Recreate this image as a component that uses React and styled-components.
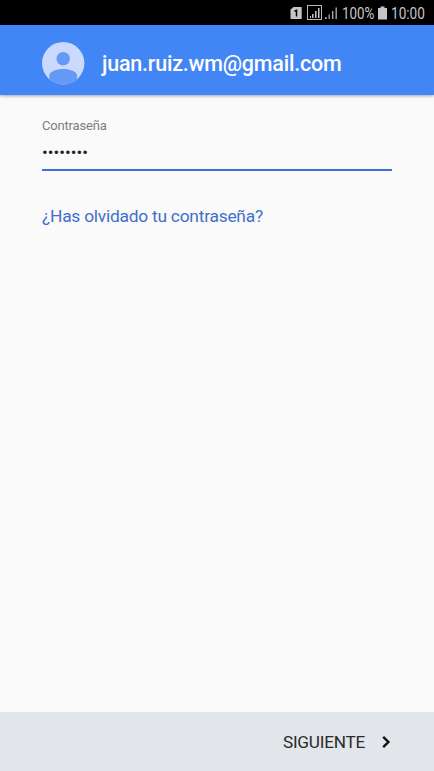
import React from 'react';
import styled, { createGlobalStyle } from 'styled-components';

const GlobalStyle = createGlobalStyle`
  *, *::before, *::after { box-sizing: border-box; }
  body { margin: 0; background: #fafafa; font-family: Roboto, "Liberation Sans", sans-serif; }
`;

const Screen = styled.div`
  display: flex;
  flex-direction: column;
  width: 100%;
  height: 100vh;
  overflow: hidden;
  background: #fafafa;
`;

const StatusBar = styled.header`
  display: flex;
  flex: none;
  align-items: center;
  justify-content: flex-end;
  height: 25px;
  padding-right: 9px;
  background: #000;
  color: #c4c4c4;
`;

const StatusIcon = styled.svg`
  display: block;
  flex: none;
  margin-right: ${(p) => p.$gap}px;
`;

const StatusText = styled.span`
  display: block;
  width: ${(p) => p.$width}px;
  margin-right: ${(p) => p.$gap || 0}px;
  font-size: 17px;
  line-height: 25px;
  white-space: nowrap;
  transform: translateY(1px) scaleX(${(p) => p.$stretch});
  transform-origin: left center;
`;

const AccountBar = styled.div`
  display: flex;
  flex: none;
  align-items: center;
  height: 70px;
  padding: 6px 42px 0;
  background: #4285f4;
  box-shadow: 0 1px 3px rgba(0, 0, 0, 0.35);
`;

const Avatar = styled.svg`
  display: block;
  flex: none;
  margin-right: 17px;
`;

const Email = styled.h1`
  margin: 1px 0 0;
  color: #fff;
  font-size: 21.5px;
  font-weight: 500;
  line-height: 28px;
  letter-spacing: -0.22px;
`;

const Content = styled.main`
  flex: 1;
  padding: 22px 42px 0;
`;

const Field = styled.div`
  display: flex;
  flex-direction: column;
  height: 54px;
  border-bottom: 2px solid #4070d0;
`;

const Label = styled.label`
  color: #7c7c7c;
  font-size: 13px;
  line-height: 17px;
  letter-spacing: -0.18px;
`;

const Password = styled.span`
  margin-top: 8px;
  color: #212121;
  font-size: 17px;
  line-height: 20px;
`;

const ForgotLink = styled.a`
  display: block;
  width: max-content;
  margin-top: 33px;
  color: #3f6fcc;
  font-size: 17.4px;
  line-height: 24px;
  letter-spacing: -0.25px;
  text-decoration: none;
`;

const Footer = styled.footer`
  display: flex;
  flex: none;
  align-items: center;
  justify-content: flex-end;
  height: 59px;
  padding: 1px 43px 0 0;
  background: #e2e6ea;
`;

const NextButton = styled.button`
  display: flex;
  align-items: center;
  gap: 17px;
  padding: 0;
  border: 0;
  background: none;
  color: #2a2a2a;
  font: 400 17.2px/24px Roboto, "Liberation Sans", sans-serif;
  letter-spacing: -0.24px;
`;

function SimIcon() {
  return (
    <StatusIcon $gap={5} width="12" height="14" viewBox="0 0 12 14">
      <path d="M3.5 1H11.7v12H.5V3.5Z" fill="#c4c4c4" />
      <path d="M4.5 5.2 6.5 4.4V10.5" fill="none" stroke="#000" strokeWidth="1.5" />
    </StatusIcon>
  );
}

function BoxedSignalIcon() {
  return (
    <StatusIcon $gap={2} width="15" height="15" viewBox="0 0 15 15">
      <rect x=".5" y=".5" width="14" height="14" fill="none" stroke="#b8b8b8" />
      <path d="M3 11h1v2H3ZM5 9h1.5v4H5ZM8 6h1.5v7H8ZM11 3h1.5v10H11Z" fill="#c4c4c4" />
    </StatusIcon>
  );
}

function SignalIcon() {
  return (
    <StatusIcon $gap={4} width="14" height="14" viewBox="0 0 14 14">
      <path d="M1 11.2h1.8V13H1ZM4.5 8.5h1.3V13H4.5ZM8 5h1.4v8H8ZM11.5 1.5h1.4V13h-1.4Z" fill="#a8a8a8" />
    </StatusIcon>
  );
}

function BatteryIcon() {
  return (
    <StatusIcon $gap={4} width="9" height="14" viewBox="0 0 9 14">
      <path d="M2.5 .5h4V2H9v11.5H0V2h2.5Z" fill="#c4c4c4" />
    </StatusIcon>
  );
}

function ProfileAvatar() {
  return (
    <Avatar width="43" height="43" viewBox="0 0 43 43" aria-hidden="true">
      <circle cx="21.2" cy="21.2" r="21.2" fill="#c9dafc" />
      <circle cx="21.2" cy="16.8" r="6.8" fill="#6499f7" />
      <path d="M7.3 37.2v-3.7c0-4 7.4-6.5 13.9-6.5s13.9 2.5 13.9 6.5v3.7a21.2 21.2 0 0 1-27.8 0Z" fill="#6499f7" />
    </Avatar>
  );
}

export default function App() {
  return (
    <Screen>
      <GlobalStyle />
      <StatusBar>
        <SimIcon />
        <BoxedSignalIcon />
        <SignalIcon />
        <StatusText $width={33} $gap={3} $stretch={0.785}>100%</StatusText>
        <BatteryIcon />
        <StatusText $width={34} $stretch={0.8}>10:00</StatusText>
      </StatusBar>
      <AccountBar>
        <ProfileAvatar />
        <Email>juan.ruiz.wm@gmail.com</Email>
      </AccountBar>
      <Content>
        <Field>
          <Label>Contraseña</Label>
          <Password>••••••••</Password>
        </Field>
        <ForgotLink>¿Has olvidado tu contraseña?</ForgotLink>
      </Content>
      <Footer>
        <NextButton type="button">
          SIGUIENTE
          <svg width="9" height="14" viewBox="0 0 9 14" aria-hidden="true">
            <path d="m1.2 1.8 5.2 5.2-5.2 5.2" fill="none" stroke="#111" strokeWidth="2.4" />
          </svg>
        </NextButton>
      </Footer>
    </Screen>
  );
}
